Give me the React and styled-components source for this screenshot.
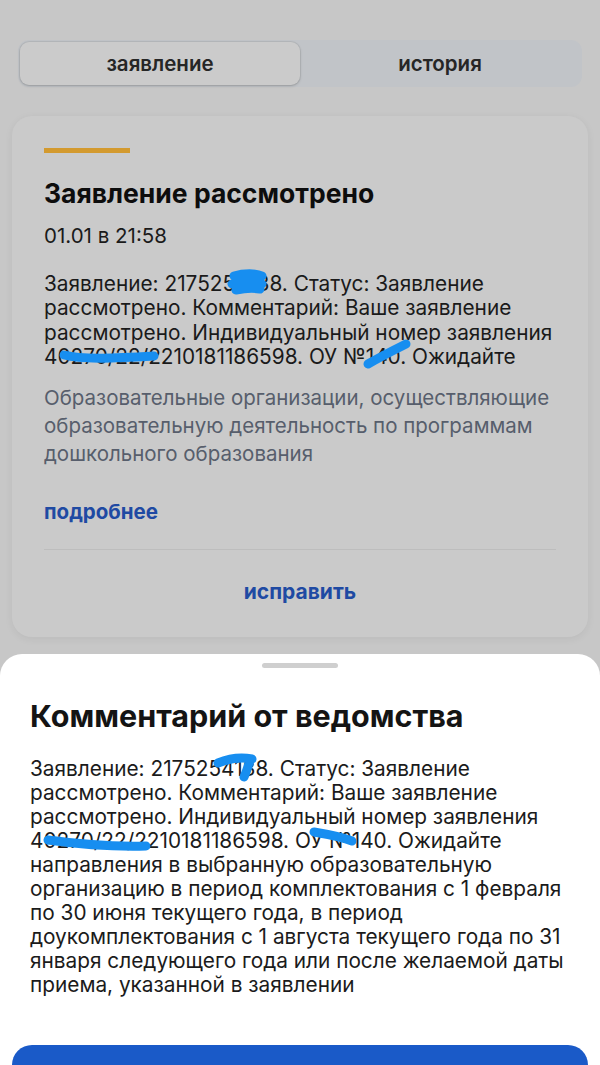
import React from "react";
import styled, { createGlobalStyle } from "styled-components";

const GlobalStyle = createGlobalStyle`
	html, body {
		margin: 0;
		padding: 0;
		background: #c7c7c7;
	}
	body {
		font-family: "Inter", "Noto Sans", sans-serif;
		-webkit-font-smoothing: antialiased;
	}
`;

const statusText =
	"Заявление: 2175254138. Статус: Заявление рассмотрено. Комментарий: Ваше заявление рассмотрено. Индивидуальный номер заявления 40270/22/2210181186598. ОУ №140. Ожидайте направления в выбранную образовательную организацию в период комплектования с 1 февраля по 30 июня текущего года, в период доукомплектования с 1 августа текущего года по 31 января следующего года или после желаемой даты приема, указанной в заявлении";

// the card only previews the first four lines of the comment
const previewText = statusText.slice(0, statusText.indexOf("Ожидайте") + 8);

// hand-drawn redaction strokes, coordinates relative to the text block
const cardMarks = [
	"M190 4 C200 1 212 1 218 4 M188 12 C200 9 210 9 218 12 M192 18 C202 16 210 16 216 17",
	"M20 83 C40 88 70 86 110 84",
	"M324 92 C338 84 352 77 362 72",
];

const sheetMarks = [
	"M188 6 C200 1 212 0 222 2 M220 2 C218 10 216 16 214 20",
	"M18 83 C40 86 80 90 116 89",
	"M284 75 C296 77 312 80 322 84",
];

const App = () => {
	return (
		<Screen>
			<GlobalStyle />
			<Tabs>
				<Tab active>заявление</Tab>
				<Tab>история</Tab>
			</Tabs>
			<Card>
				<StatusBar />
				<CardTitle>Заявление рассмотрено</CardTitle>
				<DateText>01.01 в 21:58</DateText>
				<Marked>
					<PreviewText>{previewText}</PreviewText>
					<Scribble marks={cardMarks} />
				</Marked>
				<OrgText>
					Образовательные организации, осуществляющие образовательную
					деятельность по программам дошкольного образования
				</OrgText>
				<MoreLink>подробнее</MoreLink>
				<Divider />
				<FixButton>исправить</FixButton>
			</Card>

			<Sheet>
				<Handle />
				<SheetTitle>Комментарий от ведомства</SheetTitle>
				<Marked>
					<SheetText>{statusText}</SheetText>
					<Scribble marks={sheetMarks} />
				</Marked>
				<PrimaryButton />
			</Sheet>
		</Screen>
	);
};

const Scribble = ({ marks }) => (
	<MarkLayer viewBox="0 0 540 100" preserveAspectRatio="xMinYMin meet">
		{marks.map((d, i) => (
			<path
				key={i}
				d={d}
				fill="none"
				stroke="#178ef0"
				strokeWidth="9"
				strokeLinecap="round"
				strokeLinejoin="round"
			/>
		))}
	</MarkLayer>
);

const Screen = styled.div`
	position: relative;
	height: 1065px;
	overflow: hidden;
	box-sizing: border-box;
	padding: 40px 12px 0;
	background: #c7c7c7;
`;

const Tabs = styled.div`
	display: grid;
	grid-template-columns: 1fr 1fr;
	height: 47px;
	margin: 0 6px;
	padding: 2px;
	box-sizing: border-box;
	border-radius: 11px;
	background: #c1c4c8;
`;

const Tab = styled.div`
	display: flex;
	justify-content: center;
	align-items: center;
	border-radius: 9px;
	font-size: 20.5px;
	font-weight: 600;
	color: #262626;
	background: ${(p) => (p.active ? "#cbcbcb" : "transparent")};
	box-shadow: ${(p) =>
		p.active ? "0 1px 3px rgba(0,0,0,0.18), 0 0 0 1px rgba(0,0,0,0.05)" : "none"};
`;

const Card = styled.div`
	display: flex;
	flex-direction: column;
	margin-top: 29px;
	padding: 32px 32px 33px;
	border-radius: 20px;
	background: #cacaca;
	box-shadow: 0 2px 8px rgba(0, 0, 0, 0.06);
`;

const StatusBar = styled.div`
	width: 86px;
	height: 5px;
	background: #d39a2f;
`;

const CardTitle = styled.div`
	margin-top: 25px;
	font-size: 26.5px;
	line-height: 30px;
	font-weight: 700;
	color: #0d0d0d;
`;

const DateText = styled.div`
	margin-top: 16px;
	font-size: 20.5px;
	line-height: 24px;
	color: #1a1a1a;
`;

const Marked = styled.div`
	position: relative;
	margin-top: 24px;
`;

const MarkLayer = styled.svg`
	position: absolute;
	left: 0;
	top: 0;
	width: 540px;
	height: 100px;
	pointer-events: none;
	overflow: visible;
`;

const PreviewText = styled.div`
	margin-right: -24px;
	font-size: 20.8px;
	line-height: 24.4px;
	color: #1a1a1a;
`;

const OrgText = styled.div`
	margin-top: 14px;
	margin-right: -24px;
	font-size: 20.5px;
	line-height: 28px;
	color: #575e6c;
`;

const MoreLink = styled.div`
	margin-top: 32px;
	font-size: 20.5px;
	line-height: 24px;
	font-weight: 700;
	color: #1f4aa3;
`;

const Divider = styled.div`
	height: 1px;
	margin-top: 25px;
	background: #bdbdbd;
`;

const FixButton = styled.div`
	margin-top: 30px;
	text-align: center;
	font-size: 21px;
	line-height: 24px;
	font-weight: 700;
	color: #1f4aa3;
`;

const Sheet = styled.div`
	position: absolute;
	top: 654px;
	left: 0;
	right: 0;
	display: flex;
	flex-direction: column;
	padding: 9px 30px 0;
	border-radius: 22px 22px 0 0;
	background: #ffffff;
`;

const Handle = styled.div`
	align-self: center;
	width: 76px;
	height: 5px;
	border-radius: 3px;
	background: #cfcfcf;
`;

const SheetTitle = styled.div`
	margin-top: 31px;
	font-size: 30.5px;
	line-height: 34px;
	font-weight: 700;
	color: #141414;
`;

const SheetText = styled.div`
	margin-right: -8px;
	font-size: 20.8px;
	line-height: 24px;
	color: #1b1b1b;
`;

const PrimaryButton = styled.div`
	height: 56px;
	margin: 48px -18px 0;
	border-radius: 20px;
	background: #1a5ac8;
`;

export default App;
